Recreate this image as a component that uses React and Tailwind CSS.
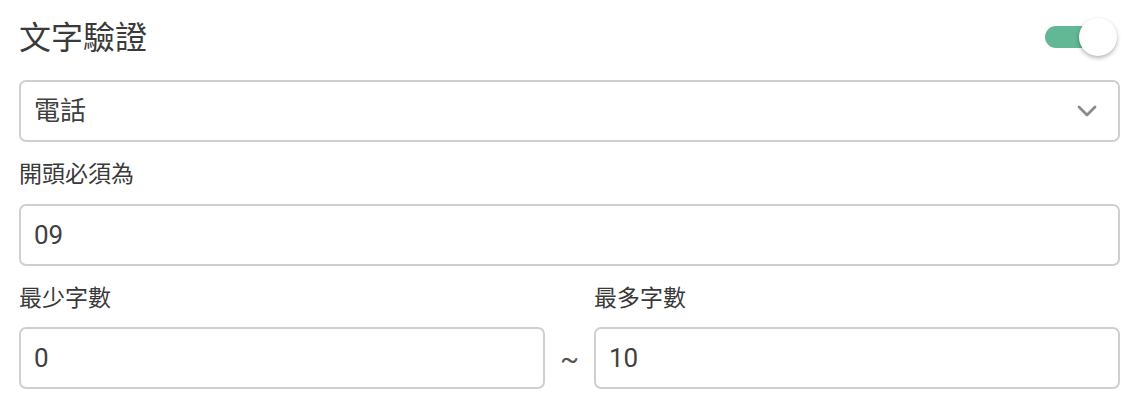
import { useState } from 'react';

const font = { fontFamily: '"Roboto", "Noto Sans CJK TC", sans-serif' };

const Toggle = ({ on, onChange }) => (
  <button
    onClick={() => onChange(!on)}
    className="relative w-[72px] h-[40px] mr-[3px] -mt-[3px]"
  >
    <span
      className={`absolute left-0 top-1/2 -translate-y-1/2 w-[62px] h-[22px] rounded-full ${
        on ? 'bg-[#62b794]' : 'bg-[#c4c4c4]'
      }`}
    />
    <span
      className={`absolute top-1/2 -translate-y-1/2 w-[38px] h-[38px] rounded-full bg-white shadow-[0_2px_4px_rgba(0,0,0,0.3)] ${
        on ? 'right-0' : 'left-[-6px]'
      }`}
    />
  </button>
);

const Box = ({ children, className = '' }) => (
  <div
    className={`h-[62px] border-2 border-[#cfcfcf] rounded-[7px] flex items-center pl-[13px] pr-[21px] text-[26px] text-[#404040] ${className}`}
  >
    {children}
  </div>
);

const Label = ({ children, className = '' }) => (
  <div className={`text-[23px] leading-[32px] text-[#3a3a3a] ${className}`}>{children}</div>
);

export default function App() {
  const [enabled, setEnabled] = useState(true);

  return (
    <div className="w-[1140px] h-[410px] bg-white pl-[19px] pr-[20px] pt-[14px]" style={font}>
      {/* Header */}
      <div className="h-[48px] flex items-center justify-between">
        <h2 className="text-[32px] leading-[48px] text-[#3a3a3a]">文字驗證</h2>
        <Toggle on={enabled} onChange={setEnabled} />
      </div>

      {/* Type select */}
      <Box className="mt-[18px] justify-between">
        <span>電話</span>
        <svg width="20" height="12" viewBox="0 0 20 12" fill="none">
          <polyline
            points="2,2 10,10 18,2"
            stroke="#8a8a8a"
            strokeWidth="2.8"
            strokeLinecap="round"
            strokeLinejoin="round"
          />
        </svg>
      </Box>

      {/* Prefix */}
      <Label className="mt-[17px]">開頭必須為</Label>
      <Box className="mt-[13px]">09</Box>

      {/* Length range */}
      <div className="flex mt-[17px]">
        <div className="flex-1">
          <Label>最少字數</Label>
          <Box className="mt-[12px]">0</Box>
        </div>
        <div className="w-[49px] h-[62px] self-end flex items-center justify-center text-[28px] text-[#555] pt-[2px]">
          ~
        </div>
        <div className="flex-1">
          <Label>最多字數</Label>
          <Box className="mt-[12px]">10</Box>
        </div>
      </div>
    </div>
  );
}
